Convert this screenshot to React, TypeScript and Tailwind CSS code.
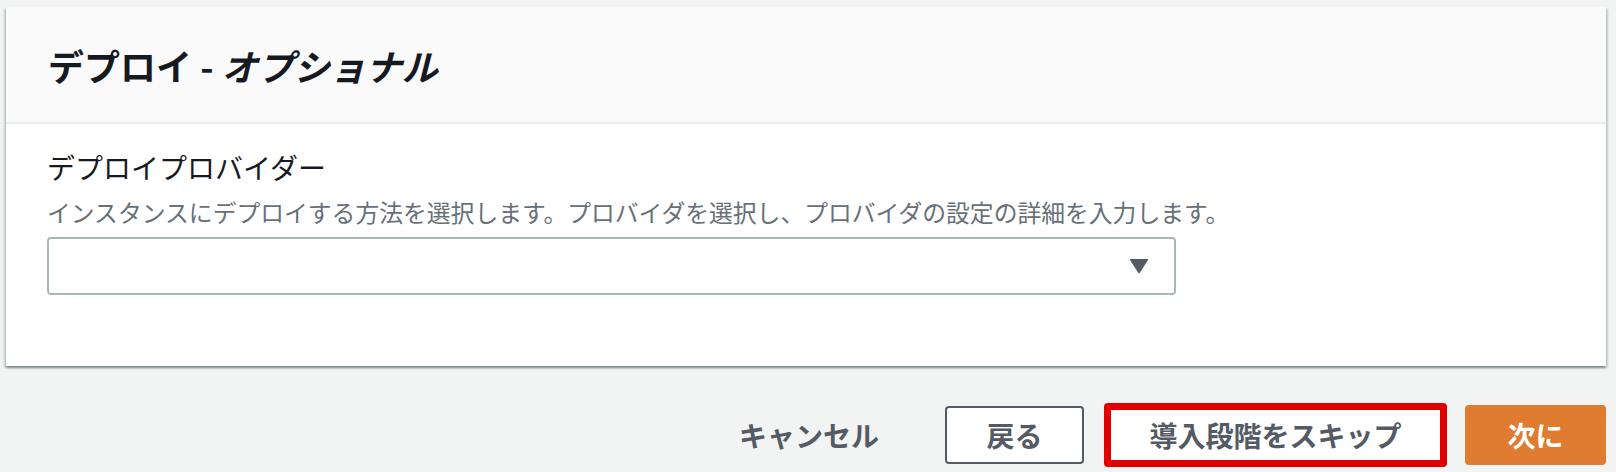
import React from "react";

export default function App() {
  const font = { fontFamily: '"Noto Sans CJK JP", "Noto Sans", sans-serif' };
  return (
    <div
      className="h-[472px] w-[1616px] overflow-hidden bg-[#f2f3f3] pt-[7px] pl-[6px] pr-[10px]"
      style={font}
    >
      <div className="bg-white shadow-[0_2px_2px_0_rgba(0,28,36,0.3),2px_2px_2px_0_rgba(0,28,36,0.15),-2px_2px_2px_0_rgba(0,28,36,0.15)]">
        <div className="flex h-[117px] items-center border-b-2 border-[#eaeded] bg-[#fafafa] px-[42px]">
          <h2 className="text-[36px] font-bold leading-none text-[#16191f]">
            デプロイ - <i>オプショナル</i>
          </h2>
        </div>
        <div className="px-[41px] pt-[25px] pb-[71px]">
          <div className="text-[28px] leading-[36px] text-[#16191f]">デプロイプロバイダー</div>
          <div className="mt-[11px] text-[23.8px] leading-[32px] text-[#687078]">
            インスタンスにデプロイする方法を選択します。プロバイダを選択し、プロバイダの設定の詳細を入力します。
          </div>
          <div className="mt-[9px] flex h-[58px] w-[1129px] items-center justify-end rounded-[4px] border-2 border-[#aab7b8] bg-white pr-[25px]">
            <svg width="20" height="16" viewBox="0 0 20 16">
              <path d="M1.5 1 L18.5 1 Q19.5 1 19 2 L11 14.5 Q10 16 9 14.5 L1 2 Q0.5 1 1.5 1 Z" fill="#545b64" />
            </svg>
          </div>
        </div>
      </div>
      <div className="mt-[37px] flex items-center justify-end">
        <button className="mr-[66px] text-[28px] font-bold leading-none text-[#545b64]">キャンセル</button>
        <button className="flex h-[58px] w-[139px] items-center justify-center rounded-[4px] border-2 border-[#545b64] bg-white text-[28px] font-bold text-[#545b64]">
          戻る
        </button>
        <button className="ml-[20px] flex h-[64px] w-[343px] items-center justify-center rounded-[4px] border-[7px] border-[#e00000] bg-white text-[28px] font-bold text-[#545b64]">
          導入段階をスキップ
        </button>
        <button className="ml-[18px] flex h-[60px] w-[141px] items-center justify-center rounded-[4px] bg-[#e07b32] text-[28px] font-bold text-white">
          次に
        </button>
      </div>
    </div>
  );
}
